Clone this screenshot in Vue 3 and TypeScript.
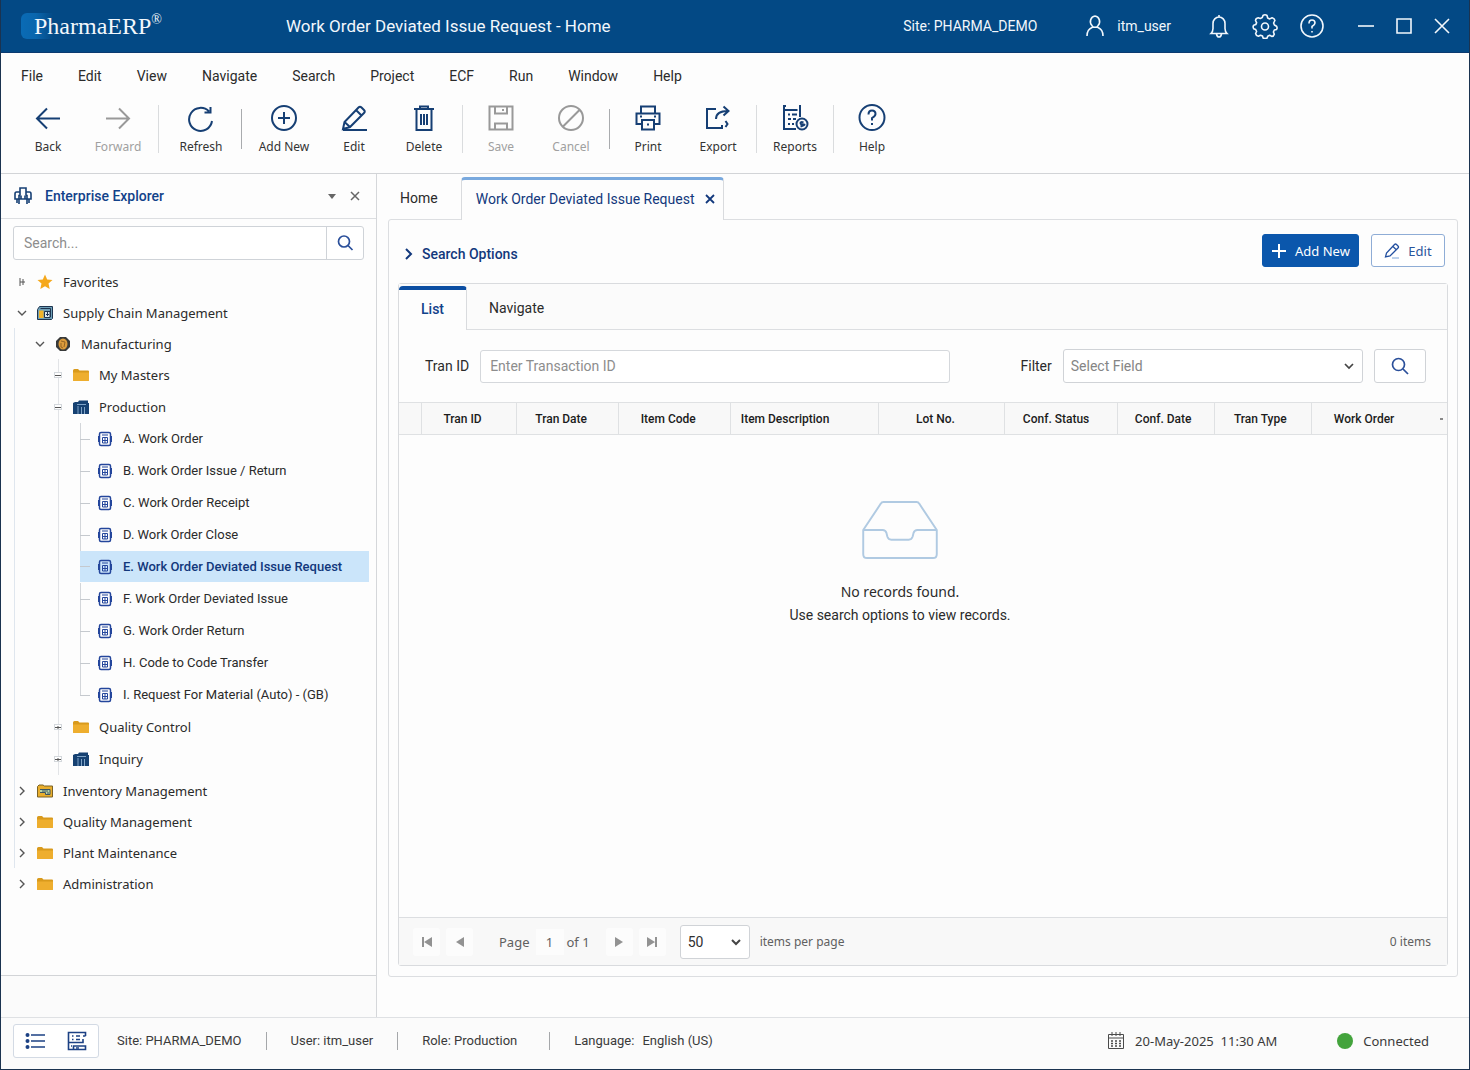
<script setup lang="ts">
import { ref } from 'vue'

interface Tool {
  label: string
  icon: string
  disabled?: boolean
}

interface ToolGroup {
  divider: '' | 'wide' | 'wide strong' | 'narrow' | 'narrow strong'
  tools: Tool[]
}

interface TreeNode {
  label: string
  level: number
  icon: string
  toggle: string
  guides?: boolean
  last?: boolean
}

const menus: string[] = ['File', 'Edit', 'View', 'Navigate', 'Search', 'Project', 'ECF', 'Run', 'Window', 'Help']

const groups: ToolGroup[] = [
  { divider: '', tools: [{ label: 'Back', icon: 'back' }, { label: 'Forward', icon: 'forward', disabled: true }] },
  { divider: 'wide', tools: [{ label: 'Refresh', icon: 'refresh' }] },
  {
    divider: 'wide strong',
    tools: [
      { label: 'Add New', icon: 'add' },
      { label: 'Edit', icon: 'edit' },
      { label: 'Delete', icon: 'delete' },
    ],
  },
  {
    divider: 'narrow',
    tools: [
      { label: 'Save', icon: 'save', disabled: true },
      { label: 'Cancel', icon: 'cancel', disabled: true },
    ],
  },
  { divider: 'narrow strong', tools: [{ label: 'Print', icon: 'print' }, { label: 'Export', icon: 'export' }] },
  { divider: 'narrow', tools: [{ label: 'Reports', icon: 'reports' }] },
  { divider: 'narrow', tools: [{ label: 'Help', icon: 'help' }] },
]

const toolPaths: Record<string, string> = {
  back: 'M27 15.500H4M14 5.500L4 15.500l10 10',
  forward: 'M3 15.500h23M16 5.500l10 10-10 10',
  refresh: 'M26 18a11.500 11.500 0 1 1-3-9.500M24.500 4v5.500h-6',
  add: 'M15 3a12 12 0 1 0 0 24a12 12 0 0 0 0-24M15 9v12M9 15h12',
  edit: 'M4 26l1.500-7L19.500 4.500q1.500-1.500 3 0l2.500 2.500q1.500 1.500 0 3L11 24zM17 7l5.500 5.500M5.500 19l5.500 5M4 27h24',
  delete: 'M5 6h20M11 6V3.500h8V6M7.500 6v21h15V6M12 11v11M15 11v11M18 11v11',
  save: 'M3.500 3.500h23v23h-23zM9 3.500v7h12v-7M9 26.500v-6h12v6M17 6v2',
  cancel: 'M15 3a12 12 0 1 0 0 24a12 12 0 0 0 0-24M7 23.500L23.500 7',
  print: 'M8 10V3.500h14V10M8 21H3.500V10.500h23V21H22M9 17h12v9.500H9zM7 13.500h2M21 13.500h2M15 20.500v2',
  export: 'M13 6H4v19h15v-3M13 16q0-8 12-8M20.500 3.500l5 4.500-5 4.500M22.500 18l2 3-2 3',
  reports: 'M4 2v24h12M4 3h2M4 7h13.500M20 2v12M8 11.500h2M12 11.500h5M8 16h3M13 16h3M8 21h2M12 21h2M22 15.500a5.500 5.500 0 1 0 0 11a5.500 5.500 0 0 0 0-11M23.500 19.500q-3-1-3 .5t3 1.500t-3 2',
  help: 'M15 2a12.500 12.500 0 1 0 0 25a12.500 12.500 0 0 0 0-25M11.500 11.500q0-4 3.500-4t3.500 3.500q0 2-3.500 4v2.500M15 20v2',
}

const tree: TreeNode[] = [
  { label: 'Favorites', level: 0, icon: 'star', toggle: 'leaf' },
  { label: 'Supply Chain Management', level: 0, icon: 'supply', toggle: 'open' },
  { label: 'Manufacturing', level: 1, icon: 'gear', toggle: 'open', guides: true },
  { label: 'My Masters', level: 2, icon: 'folder', toggle: 'minus', guides: true },
  { label: 'Production', level: 2, icon: 'books', toggle: 'minus', guides: true },
  { label: 'A. Work Order', level: 3, icon: 'doc', toggle: '', guides: true },
  { label: 'B. Work Order Issue / Return', level: 3, icon: 'doc', toggle: '', guides: true },
  { label: 'C. Work Order Receipt', level: 3, icon: 'doc', toggle: '', guides: true },
  { label: 'D. Work Order Close', level: 3, icon: 'doc', toggle: '', guides: true },
  { label: 'E. Work Order Deviated Issue Request', level: 3, icon: 'doc', toggle: '', guides: true },
  { label: 'F. Work Order Deviated Issue', level: 3, icon: 'doc', toggle: '', guides: true },
  { label: 'G. Work Order Return', level: 3, icon: 'doc', toggle: '', guides: true },
  { label: 'H. Code to Code Transfer', level: 3, icon: 'doc', toggle: '', guides: true },
  { label: 'I. Request For Material (Auto) - (GB)', level: 3, icon: 'doc', toggle: '', guides: true, last: true },
  { label: 'Quality Control', level: 2, icon: 'folder', toggle: 'plus', guides: true },
  { label: 'Inquiry', level: 2, icon: 'books', toggle: 'plus', guides: true },
  { label: 'Inventory Management', level: 0, icon: 'inventory', toggle: 'closed', guides: true },
  { label: 'Quality Management', level: 0, icon: 'folder', toggle: 'closed', guides: true },
  { label: 'Plant Maintenance', level: 0, icon: 'folder', toggle: 'closed', guides: true },
  { label: 'Administration', level: 0, icon: 'folder', toggle: 'closed' },
]

const selected = ref('E. Work Order Deviated Issue Request')
const explorerQuery = ref('')
const tranId = ref('')
const filterField = ref('')
const pageSize = ref('50')

const columns: { label: string; cls: string }[] = [
  { label: 'Tran ID', cls: 'c-id' },
  { label: 'Tran Date', cls: 'c-date' },
  { label: 'Item Code', cls: 'c-code' },
  { label: 'Item Description', cls: 'c-desc' },
  { label: 'Lot No.', cls: 'c-lot' },
  { label: 'Conf. Status', cls: 'c-status' },
  { label: 'Conf. Date', cls: 'c-cdate' },
  { label: 'Tran Type', cls: 'c-type' },
  { label: 'Work Order', cls: 'c-order' },
]
</script>

<template>
  <div class="app">
    <header class="titlebar">
      <div class="brand"><span>PharmaERP</span><sup>®</sup></div>
      <h1>Work Order Deviated Issue Request - Home</h1>
      <div class="session">
        <span class="site">Site: PHARMA_DEMO</span>
        <span class="user">
          <svg width="20" height="24" viewBox="0 0 20 24"><path d="M10 2a5 5.500 0 0 0-3 9.500q1 .8 0 2q-5 2-5 8.500M10 2a5 5.500 0 0 1 3 9.500q-1 .8 0 2q5 2 5 8.500M7 12.500q3 1.500 6 0" /></svg>
          itm_user
        </span>
      </div>
      <div class="header-icons">
        <button type="button" aria-label="Notifications">
          <svg width="24" height="26" viewBox="0 0 24 26"><path d="M12 2v2M4 20.500q2-2 2-5V10.500a6 6.500 0 0 1 12 0V15.500q0 3 2 5zM9.500 21q.5 3 2.500 3t2.500-3" /></svg>
        </button>
        <button type="button" aria-label="Settings">
          <svg width="26" height="26" viewBox="0 0 26 26"><path stroke-linejoin="round" d="M11 2.500q2-1.500 4 0l.7 2.500 2 .9 2.500-1.200q2.300.5 2.700 2.800L21.600 10l.8 2 2.100 1.200q1.200 2 0 3.200l-2.200.6-.9 2 .9 2.200q-.6 2.200-2.600 2.200l-2-1.100-2 .9-.6 1.800q-2.100 1.200-4 0l-.6-1.900-2-.9-2.200 1q-2.200-.3-2.700-2.700l1-2-.9-2-2-.8q-1.200-1.900 0-3.500l2.100-.6.8-2L3.500 7.500q.3-2.300 2.700-2.700l2.100.6 2-.8z" /><circle cx="13" cy="13.500" r="3.500" /></svg>
        </button>
        <button type="button" aria-label="Help">
          <svg width="26" height="26" viewBox="0 0 26 26"><circle cx="13" cy="13" r="11" /><path d="M10 10.500q0-3.500 3-3.500t3 3q0 1.600-3 3.500v2M13 18v1.500" /></svg>
        </button>
      </div>
      <div class="window-icons">
        <button type="button" aria-label="Minimize"><svg width="18" height="18" viewBox="0 0 18 18"><path d="M1 9h16" /></svg></button>
        <button type="button" aria-label="Maximize"><svg width="18" height="18" viewBox="0 0 18 18"><path d="M2 2h14v14H2z" /></svg></button>
        <button type="button" aria-label="Close window"><svg width="18" height="18" viewBox="0 0 18 18"><path d="M2 2l14 14M16 2L2 16" /></svg></button>
      </div>
    </header>

    <nav class="menubar">
      <button v-for="m in menus" :key="m" type="button">{{ m }}</button>
    </nav>

    <div class="toolbar">
      <template v-for="(g, gi) in groups" :key="gi">
        <span v-if="g.divider" class="divider" :class="g.divider"></span>
        <button v-for="t in g.tools" :key="t.label" type="button" class="tool" :disabled="t.disabled">
          <svg width="30" height="30" viewBox="0 0 30 30"><path :d="toolPaths[t.icon]" /></svg>
          <span>{{ t.label }}</span>
        </button>
      </template>
    </div>

    <div class="body">
      <aside class="explorer">
        <div class="explorer-head">
          <svg class="explorer-icon" width="20" height="20" viewBox="0 0 20 20"><path d="M7 9V2h6v7M7 6H3.500Q2 6 2 8v5h4V9.500h1.500M12.500 9.500H14V13h4V8q0-2-1.500-2H13M4 13v4M8 9.500V13H6v5M12 9.500V13h2v5M16 13v4M8 13h4" /></svg>
          <h2>Enterprise Explorer</h2>
          <button type="button" aria-label="Explorer options"><svg width="8" height="5" viewBox="0 0 8 5"><path d="M0 0h8L4 5z" fill="#666" /></svg></button>
          <button type="button" aria-label="Close explorer"><svg width="10" height="10" viewBox="0 0 10 10"><path d="M1 1l8 8M9 1L1 9" stroke="#666" stroke-width="1.500" /></svg></button>
        </div>
        <form class="explorer-search" @submit.prevent>
          <input v-model="explorerQuery" type="text" placeholder="Search..." aria-label="Search explorer" />
          <button type="submit" aria-label="Search"><svg width="18" height="18" viewBox="0 0 18 18"><circle cx="8" cy="7.500" r="5.500" /><path d="M12 11.500l4.500 4.500" /></svg></button>
        </form>
        <ul class="tree">
          <li v-for="n in tree" :key="n.label" :class="['level-' + n.level, { guides: n.guides, last: n.last, selected: n.label === selected }]">
            <button type="button" class="node" @click="selected = n.label">
              <span v-if="n.level === 3" class="stub"></span>
              <svg v-else class="toggle" width="12" height="12" viewBox="0 0 12 12">
                <path v-if="n.toggle === 'open'" d="M2 4l4 4 4-4" />
                <path v-else-if="n.toggle === 'closed'" d="M4 2l4 4-4 4" />
                <path v-else-if="n.toggle === 'leaf'" d="M4 2v8M7 3v6M4 6h5" stroke-width="1" />
                <g v-else stroke-width="1">
                  <rect x="2.500" y="3.500" width="7" height="5" fill="#fff" stroke="#d4d8dc" />
                  <path d="M3 6.500h6" />
                  <path v-if="n.toggle === 'plus'" d="M6 5v3" />
                </g>
              </svg>
              <svg class="glyph" width="16" height="16" viewBox="0 0 16 16">
                <path v-if="n.icon === 'star'" d="M8 .5l2.200 5 5.300.5-4 3.600 1.200 5.400L8 12.200 3.300 15l1.200-5.400-4-3.600 5.300-.5z" fill="#f5a81c" />
                <g v-else-if="n.icon === 'folder'">
                  <path d="M0 3.500Q0 2 1.500 2H5l1.500 1.500H15q1 0 1 1V13q0 1-1 1H1q-1 0-1-1z" fill="#d99a1c" />
                  <path d="M0 5.500h16V13q0 1-1 1H1q-1 0-1-1z" fill="#eeae2e" />
                </g>
                <g v-else-if="n.icon === 'supply'">
                  <path d="M.5 4.500l2-3h13v12l-1 1H.5z" fill="#6fa0b8" stroke="#1e3550" />
                  <path d="M2 5.500h4.500v7.500H2z" fill="#f0b42c" />
                  <path d="M7.500 6.500h5.500v6H7.500z" fill="#dce9f2" stroke="#1e3550" />
                  <path d="M9 9.500h3M10.500 7v4M3.500 3.500h10V12" fill="none" stroke="#1e3550" />
                </g>
                <g v-else-if="n.icon === 'inventory'">
                  <path d="M.5 3.500L2 2h4l1.500 1h8v11H.5z" fill="#e9ae2c" stroke="#7b6226" />
                  <path d="M3 6.500h10v5H8.500v-2H3" fill="#bcd4a4" stroke="#3a5562" />
                  <path d="M5 8h6M10 10h2" stroke="#3a5562" />
                </g>
                <g v-else-if="n.icon === 'gear'">
                  <path d="M5 1h6l4 4v6l-4 4H5l-4-4V5z" fill="#383a3a" />
                  <ellipse cx="8" cy="8" rx="4.500" ry="5.500" fill="#dc9c3c" />
                  <path d="M6 5l4 1-1 5M6 7v4l2 1" fill="none" stroke="#946424" />
                </g>
                <g v-else-if="n.icon === 'books'">
                  <path d="M0 4l2-1h3l1-1.500h9V4h1v11H0z" fill="#164172" />
                  <path d="M5 7v8M8.500 8v7M11.500 8v7M4 5.500h9" stroke="#7fa3c6" />
                </g>
                <g v-else fill="none" stroke="#24469c">
                  <path d="M4 1.500h8q1.500 0 1.500 1.500v10q0 1.500-1.500 1.500H4q-1.500 0-1.500-1.500V3q0-1.500 1.500-1.500z" stroke-width="1.500" />
                  <path d="M1.500 5v6M14.500 5v6" stroke-width="1" />
                  <path d="M5 4h6M5.500 6.500h5v5.500h-5zM8 7v5M5.500 9.500h5" />
                </g>
              </svg>
              <span class="node-label">{{ n.label }}</span>
            </button>
          </li>
        </ul>
        <div class="explorer-foot"></div>
      </aside>

      <main class="work">
        <div class="doc-tabs">
          <button type="button" class="doc-tab">Home</button>
          <div class="doc-tab active">
            <button type="button">Work Order Deviated Issue Request</button>
            <button type="button" aria-label="Close tab"><svg width="10" height="10" viewBox="0 0 10 10"><path d="M1 1l8 8M9 1L1 9" stroke="#12387c" stroke-width="1.800" /></svg></button>
          </div>
        </div>
        <section class="panel">
          <div class="panel-head">
            <button type="button" class="options">
              <svg width="8" height="12" viewBox="0 0 8 12"><path d="M1 1l5 5-5 5" fill="none" stroke="#12387c" stroke-width="2" /></svg>
              Search Options
            </button>
            <button type="button" class="primary">
              <svg width="16" height="16" viewBox="0 0 16 16"><path d="M8 1v14M1 8h14" stroke="#fff" stroke-width="2" /></svg>
              Add New
            </button>
            <button type="button" class="outline">
              <svg width="16" height="16" viewBox="0 0 16 16"><path d="M1.500 14l1-4L10.500 1.500q1-1 2 0l1.500 1.500q1 1 0 2L6 13zM9 3.500l3.500 3.500" fill="none" stroke="#2450a0" stroke-width="1.300" /><path d="M8 15h7" stroke="#7da4d8" /></svg>
              Edit
            </button>
          </div>

          <div class="card">
            <div class="view-tabs">
              <button type="button" class="active">List</button>
              <button type="button">Navigate</button>
            </div>
            <form class="filters" @submit.prevent>
              <label for="tran-id">Tran ID</label>
              <input id="tran-id" v-model="tranId" type="text" placeholder="Enter Transaction ID" />
              <label class="filter-label" for="filter-field">Filter</label>
              <div class="select-wrap filter-select">
                <select id="filter-field" v-model="filterField">
                  <option value="">Select Field</option>
                  <option v-for="c in columns" :key="c.label" :value="c.label">{{ c.label }}</option>
                </select>
                <svg width="12" height="8" viewBox="0 0 12 8"><path d="M2 2l4 4 4-4" /></svg>
              </div>
              <button type="submit" aria-label="Apply filter"><svg width="18" height="18" viewBox="0 0 18 18"><circle cx="7.500" cy="7.500" r="6" /><path d="M12 12l5 5" /></svg></button>
            </form>
            <table>
              <thead>
                <tr>
                  <th class="c-mark"></th>
                  <th v-for="c in columns" :key="c.label" :class="c.cls" scope="col">{{ c.label }}</th>
                  <th class="c-end"><span class="dot"></span></th>
                </tr>
              </thead>
            </table>
            <div class="empty">
              <svg width="78" height="60" viewBox="0 0 80 62"><path d="M2 31L20 4q1-2 3-2h34q2 0 3 2l18 27v25q0 4-4 4H6q-4 0-4-4zM2 31h20q3 0 4 3l1 4q1 3 4 3h18q3 0 4-3l1-4q1-3 4-3h20" /></svg>
              <p class="empty-title">No records found.</p>
              <p>Use search options to view records.</p>
            </div>
            <footer class="pager">
              <button type="button" aria-label="First page"><svg width="10" height="10" viewBox="0 0 10 10"><path d="M0 0h2v10H0zM10 0v10L2 5z" /></svg></button>
              <button type="button" aria-label="Previous page"><svg width="10" height="10" viewBox="0 0 10 10"><path d="M9 0v10L1 5z" /></svg></button>
              <span class="page-word">Page</span>
              <span class="page-number">1</span>
              <span class="page-total">of 1</span>
              <button type="button" aria-label="Next page"><svg width="10" height="10" viewBox="0 0 10 10"><path d="M1 0v10l8-5z" /></svg></button>
              <button type="button" aria-label="Last page"><svg width="10" height="10" viewBox="0 0 10 10"><path d="M8 0h2v10H8zM0 0v10l8-5z" /></svg></button>
              <div class="select-wrap size-select">
                <select id="page-size" v-model="pageSize">
                  <option>50</option>
                  <option>100</option>
                </select>
                <svg width="12" height="8" viewBox="0 0 12 8"><path d="M2 2l4 4 4-4" /></svg>
              </div>
              <label for="page-size">items per page</label>
              <span class="count">0 items</span>
            </footer>
          </div>
        </section>
      </main>
    </div>

    <footer class="statusbar">
      <div class="view-switch">
        <button type="button" aria-label="List view"><svg width="20" height="18" viewBox="0 0 20 18"><path d="M6 3h14M6 9h14M6 15h14" stroke-width="1.500" /><path d="M2.500 3h.01M2.500 9h.01M2.500 15h.01" stroke-width="4" stroke-linecap="round" /></svg></button>
        <button type="button" aria-label="Detail view"><svg width="20" height="20" viewBox="0 0 20 20"><path d="M18.500 5V1.500h-17v17h5M18.500 5H16M1.500 11.500h14.500V8M6.500 18.500V15h12v3.500h-12" stroke-width="1.600" /><path d="M5 5h1.500M9 5h4M5 8.500h1.500M9 8.500h4M4 15h1M9 17h3" stroke-width="1.500" /></svg></button>
      </div>
      <span class="fact">Site: PHARMA_DEMO</span>
      <span class="fact">User: itm_user</span>
      <span class="fact">Role: Production</span>
      <span class="fact language"><span>Language:</span><span>English (US)</span></span>
      <span class="clock">
        <svg width="18" height="18" viewBox="0 0 18 18"><path d="M1.500 2.500h15v14h-15zM1.500 6h15M5 0v4M9 0v4M13 0v4" /><path d="M4 9h10M4 11.500h10M4 14h10" stroke-dasharray="2 2" stroke-width="1.500" /></svg>
        20-May-2025&nbsp; 11:30 AM
      </span>
      <span class="connection"><i></i>Connected</span>
    </footer>
  </div>
</template>

<style>
body {
  margin: 0;
}
</style>

<style scoped>
* {
  box-sizing: border-box;
}

.app {
  display: flex;
  flex-direction: column;
  min-height: 100vh;
  border: solid #1b3350;
  border-width: 0 1px 1px;
  background: #fdfdfd;
  color: #2b2b2b;
  font: 14px/20px Roboto, sans-serif;
}

button {
  display: inline-flex;
  align-items: center;
  justify-content: center;
  margin: 0;
  padding: 0;
  border: 0;
  background: none;
  color: inherit;
  font: inherit;
}

h1,
h2,
p,
ul {
  margin: 0;
  padding: 0;
}

/* Title bar */
.titlebar {
  display: flex;
  align-items: center;
  height: 53px;
  padding: 0 18px 0 20px;
  border-bottom: 1px solid #0b3a70;
  background: #034985;
  color: #f2f7fc;
}

.titlebar svg {
  fill: none;
  stroke: #f2f7fc;
  stroke-width: 1.6;
}

.brand {
  display: flex;
  width: 265px;
  height: 26px;
  padding-left: 13px;
  border-radius: 6px;
  background: linear-gradient(90deg, #0a6bb5, #0a66ad 15px, #034985 32px);
  font: 24px/26px "Liberation Serif", serif;
}

.brand sup {
  font-size: 14px;
  line-height: 14px;
}

h1 {
  font-size: 17px;
  font-weight: 400;
}

.session {
  display: flex;
  align-items: center;
  gap: 48px;
  margin-left: auto;
}

.user {
  display: flex;
  align-items: center;
  gap: 12px;
}

.header-icons {
  display: flex;
  gap: 21px;
  margin-left: 36px;
}

.window-icons {
  display: flex;
  gap: 20px;
  margin-left: 32px;
}

/* Menu and toolbar */
.menubar {
  display: flex;
  gap: 35px;
  height: 46px;
  padding: 0 20px;
}

.toolbar {
  display: flex;
  align-items: flex-start;
  height: 75px;
  padding: 4px 12px 0;
  border-bottom: 1px solid #d2d4d7;
  color: #333;
  font: 12px/18px "Noto Sans", sans-serif;
}

.tool {
  flex-direction: column;
  gap: 5px;
  width: 70px;
}

.tool svg {
  fill: none;
  stroke: #163f74;
  stroke-width: 2;
}

.tool:disabled {
  color: #a0a0a0;
}

.tool:disabled svg {
  stroke: #999;
}

.divider {
  width: 1px;
  height: 48px;
  margin: 2px 3px;
  background: #dadcde;
}

.divider.wide {
  margin: 2px 7px 2px 5px;
}

.divider.strong {
  height: 40px;
  margin-top: 6px;
  background: #a9abae;
}

/* Body */
.body {
  display: flex;
  flex: 1;
}

.explorer {
  display: flex;
  flex-direction: column;
  width: 376px;
  border-right: 1px solid #d5d7da;
}

.explorer-head {
  display: flex;
  align-items: center;
  gap: 14px;
  height: 45px;
  padding: 0 16px 0 12px;
  border-bottom: 1px solid #dcdee1;
}

.explorer-icon {
  margin-right: -2px;
  fill: none;
  stroke: #163f74;
  stroke-width: 1.6;
}

h2 {
  flex: 1;
  color: #12428a;
  font-size: 14px;
  font-weight: 500;
}

.explorer-search {
  display: flex;
  height: 34px;
  margin: 7px 12px 6px 12px;
  border: 1px solid #cfd3d8;
  border-radius: 3px;
  background: #fff;
}

.explorer-search input {
  flex: 1;
  min-width: 0;
  padding: 0 10px;
  border: 0;
  border-right: 1px solid #cfd3d8;
  background: none;
  font: inherit;
}

input::placeholder {
  color: #8d8d8d;
  opacity: 1;
}

.explorer-search button {
  width: 36px;
}

.explorer-search svg,
.filters button svg {
  fill: none;
  stroke: #2a4f9a;
  stroke-width: 1.7;
}

.tree {
  flex: 1;
  list-style: none;
  font: 13px/18px "Noto Sans", sans-serif;
}

.tree li {
  display: flex;
  height: 31px;
  padding: 0 7px 0 15px;
}

.tree .guides {
  background: linear-gradient(#dfe6ee, #dfe6ee) 13px 0 / 1px 100% no-repeat;
}

.tree .level-1 {
  padding-left: 33px;
}

.tree .level-2,
.tree .level-3 {
  height: 32px;
  background: linear-gradient(#dfe6ee, #dfe6ee) 13px 0 / 1px 100% no-repeat,
    linear-gradient(#e2e4e7, #e2e4e7) 57px 0 / 1px 100% no-repeat;
}

.tree .level-2 {
  padding-left: 51px;
}

.tree .level-3 {
  padding-left: 79px;
  font: 13px/18px Roboto, sans-serif;
}

.node {
  flex: 1;
  justify-content: flex-start;
}

.toggle {
  margin-right: 9px;
  fill: none;
  stroke: #555;
  stroke-width: 1.4;
}

.node-label {
  margin-left: 10px;
}

.level-3 .node {
  height: 32px;
  background: linear-gradient(#d3d6da, #d3d6da) 0 0 / 1px 100% no-repeat;
}

.level-3.last .node {
  background-size: 1px 50%;
}

.level-3.selected .node {
  height: 31px;
  background: #cbe5fa;
  color: #12387c;
  font-weight: 500;
}

.stub {
  width: 10px;
  height: 1px;
  margin-right: 7px;
  background: #c5c9ce;
}

.explorer-foot {
  height: 42px;
  border-top: 1px solid #d2d4d7;
  background: #fbfbfb;
}

.work {
  display: flex;
  flex: 1;
  flex-direction: column;
  min-width: 0;
  padding: 3px 11px 40px 11px;
}

.doc-tabs {
  display: flex;
  height: 42px;
}

.doc-tab {
  padding: 0 23px 0 12px;
}

.doc-tab.active {
  display: flex;
  gap: 10px;
  height: 43px;
  margin-bottom: -1px;
  padding: 0 8px 3px 14px;
  border: 1px solid #d9dbde;
  border-top: 3px solid #79a9de;
  border-bottom: 0;
  border-radius: 4px 4px 0 0;
  background: #fdfdfd;
  color: #12387c;
  z-index: 1;
}

.panel {
  display: flex;
  flex: 1;
  flex-direction: column;
  padding: 14px 9px 10px 9px;
  border: 1px solid #dcdee1;
  border-radius: 3px;
}

.panel-head {
  display: flex;
  align-items: center;
  gap: 12px;
  height: 33px;
  margin: 0 3px 16px 7px;
}

.options {
  align-self: flex-end;
  gap: 9px;
  height: 26px;
  margin-right: auto;
  color: #12387c;
  font-weight: 500;
}

.primary,
.outline {
  gap: 8px;
  height: 33px;
  border: 1px solid #0b57ac;
  border-radius: 3px;
  font: 13px/18px "Noto Sans", sans-serif;
}

.primary {
  width: 97px;
  background: #0b57ac;
  color: #fff;
}

.outline {
  width: 74px;
  border-color: #8fadd6;
  background: #fff;
  color: #2a559c;
}

.card {
  display: flex;
  flex: 1;
  flex-direction: column;
  border: 1px solid #d9dbde;
  border-radius: 3px;
}

.view-tabs {
  display: flex;
  height: 46px;
  padding-top: 2px;
  border-bottom: 1px solid #dcdee1;
  background: #fbfbfb;
}

.view-tabs button {
  padding: 0 22px;
}

.view-tabs .active {
  height: 44px;
  padding-bottom: 3px;
  border: solid #d9dbde;
  border-width: 4px 1px 0 0;
  border-top-color: #0b4ea2;
  border-radius: 4px 4px 0 0;
  background: #fdfdfd;
  color: #12428a;
  font-weight: 500;
}

.filters {
  display: flex;
  align-items: center;
  height: 72px;
  padding: 0 21px 0 26px;
}

.filters input {
  flex: 3;
  min-width: 0;
  height: 33px;
  margin-left: 11px;
  padding: 0 9px;
  border: 1px solid #d5d8dc;
  border-radius: 3px;
  background: #fff;
  font: inherit;
}

.filter-label {
  margin: 0 11px 0 70px;
}

.select-wrap {
  display: flex;
  align-items: center;
}

.select-wrap select {
  width: 100%;
  height: 34px;
  padding: 0 7px;
  border: 1px solid #d0d3d7;
  border-radius: 3px;
  background: #fff;
  appearance: none;
  color: #303030;
  font: inherit;
}

.select-wrap svg {
  flex: none;
  margin: 0 8px 0 -20px;
  fill: none;
  stroke: #444;
  stroke-width: 1.7;
  pointer-events: none;
}

.filter-select {
  flex: 2;
}

.filter-select select {
  color: #858585;
}

.filters button {
  width: 52px;
  height: 34px;
  margin-left: 11px;
  border: 1px solid #d0d3d7;
  border-radius: 3px;
  background: #fff;
}

table {
  width: 100%;
  border-collapse: collapse;
  table-layout: fixed;
}

th {
  height: 32px;
  padding: 0 12px 0 0;
  border: solid #dfe1e3;
  border-width: 1px 1px 1px 0;
  background: #f8f8f8;
  color: #1c1c1c;
  font: 500 12px/16px Roboto, sans-serif;
}

.c-mark { width: 22px; }
.c-id { width: 95px; }
.c-date { width: 102px; }
.c-code { width: 112px; }
.c-desc { width: 148px; padding-left: 10px; text-align: left; }
.c-lot { width: 126px; }
.c-status { width: 113px; padding-right: 10px; }
.c-cdate { width: 97px; padding-right: 6px; }
.c-type { width: 97px; padding-right: 6px; }
.c-order { width: 114px; padding-right: 10px; border-right: 0; }
.c-end { width: 21px; border-right: 0; }

.dot {
  display: block;
  width: 3px;
  height: 2px;
  margin-left: 14px;
  background: #888;
}

.empty {
  display: flex;
  flex: 1;
  flex-direction: column;
  align-items: center;
  padding: 65px 46px 24px 0;
}

.empty svg {
  margin-bottom: 20px;
  fill: none;
  stroke: #b0cae2;
  stroke-width: 2;
}

.empty p {
  line-height: 22px;
}

.empty .empty-title {
  font: 14px/24px "Noto Sans", sans-serif;
}

.pager {
  display: flex;
  align-items: center;
  height: 48px;
  padding: 0 16px 0 14px;
  border-top: 1px solid #dcdee1;
  background: #f8f8f8;
  color: #606060;
  font: 13px/18px "Noto Sans", sans-serif;
}

.pager button {
  width: 27px;
  height: 28px;
  margin-right: 6px;
  border-radius: 3px;
  background: #fcfcfc;
}

.pager button svg {
  fill: #929292;
}

.page-word {
  margin-left: 20px;
}

.page-number {
  width: 28px;
  margin: 0 3px 0 6px;
  background: #fcfcfc;
  line-height: 26px;
  text-align: center;
}

.page-total {
  margin-right: 16px;
}

.size-select {
  width: 70px;
  margin-left: 8px;
}

.size-select select {
  font: 14px/18px Roboto, sans-serif;
}

.size-select svg {
  stroke-width: 2;
}

.pager label {
  margin-left: 10px;
  font-size: 12px;
}

.count {
  margin-left: auto;
  font-size: 12px;
}

/* Status bar */
.statusbar {
  display: flex;
  align-items: center;
  height: 52px;
  padding: 0 40px 5px 12px;
  border-top: 1px solid #dfe1e4;
  background: #fbfbfb;
  color: #3a3a3a;
  font-size: 13px;
}

.view-switch {
  display: flex;
  height: 34px;
  margin-right: 18px;
  border: 1px solid #d3dae4;
  border-radius: 3px;
  background: #fff;
}

.view-switch button {
  width: 42px;
}

.view-switch svg {
  fill: none;
  stroke: #1c4184;
}

.fact {
  display: flex;
  align-items: center;
}

.fact + .fact::before {
  width: 1px;
  height: 18px;
  margin: 0 24px;
  background: #a5a7aa;
  content: "";
}

.language {
  margin-left: 8px;
}

.language span + span {
  margin-left: 8px;
}

.clock,
.connection {
  display: flex;
  align-items: center;
  gap: 10px;
  font: 13px/18px "Noto Sans", sans-serif;
}

.clock {
  margin-left: auto;
}

.clock svg {
  fill: none;
  stroke: #4a4a4a;
}

.connection {
  margin-left: 60px;
}

.connection i {
  width: 16px;
  height: 16px;
  border-radius: 50%;
  background: #43a33c;
}
</style>
